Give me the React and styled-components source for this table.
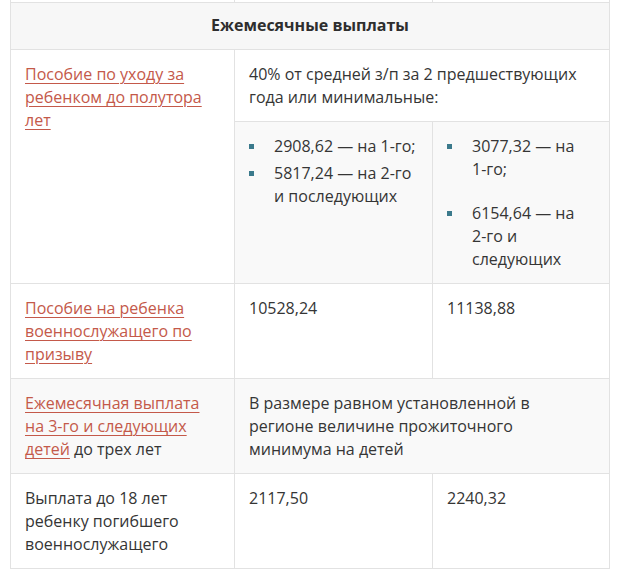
import React from 'react'
import styled, { createGlobalStyle, css } from 'styled-components'

const GlobalStyle = createGlobalStyle`
    html, body {
        margin: 0;
        padding: 0;
        background: #ffffff;
    }
    body {
        font-family: "Open Sans", "Noto Sans", "Liberation Sans", sans-serif;
        font-size: 16px;
        line-height: 23px;
        color: #353535;
    }
`
const Table = styled.div`
    width: 600px;
    margin-left: 10px;
    display: grid;
    grid-template-columns: 224px 198px 177px;
    border-left: 1px solid #e2e2e2;
    box-sizing: border-box;
`
const Cell = styled.div`
    box-sizing: border-box;
    padding: 13px 14px 12px 14px;
    border-right: 1px solid #e2e2e2;
    border-bottom: 1px solid #e2e2e2;
    background: ${({ $shade }) => $shade ? '#f9f9f9' : '#ffffff'};
    ${({ $wide }) => $wide && css`grid-column: 2 / 4;`}
    ${({ $tall }) => $tall && css`grid-row: span 2;`}
`
const CutCell = styled.div`
    height: 3px;
    box-sizing: border-box;
    border-right: 1px solid #e2e2e2;
    border-bottom: 1px solid #e2e2e2;
`
const HeadCell = styled.div`
    grid-column: 1 / 4;
    box-sizing: border-box;
    padding: 11px 14px 12px;
    background: #f7f7f7;
    border-right: 1px solid #e2e2e2;
    border-bottom: 1px solid #e2e2e2;
    text-align: center;
    font-weight: 700;
    color: #2e2e2e;
`
const DocLink = styled.a`
    color: #c4594a;
    text-decoration: underline;
    text-underline-offset: 3px;
    text-decoration-thickness: 1px;
`
const List = styled.ul`
    list-style: none;
    margin: 0;
    padding: 0;
`
const Item = styled.li`
    position: relative;
    padding-left: 25px;
    margin-bottom: ${({ $after }) => $after}px;
    &:last-child { margin-bottom: 0; }
    &::before {
        content: '';
        position: absolute;
        left: 0;
        top: 9px;
        width: 5px;
        height: 5px;
        background: #3b7a8c;
    }
`
const NoBreak = styled.span`
    white-space: nowrap;
`

export default function App() {
    return (
        <>
            <GlobalStyle />
            <Table>
                <CutCell /><CutCell /><CutCell />
                <HeadCell>Ежемесячные выплаты</HeadCell>

                <Cell $tall>
                    <DocLink href="#">Пособие по уходу за ребенком до полутора лет</DocLink>
                </Cell>
                <Cell $wide>40% от средней з/п за 2 предшествующих года или минимальные:</Cell>
                <Cell $shade>
                    <List>
                        <Item $after={4}>2908,62 — на <NoBreak>1-го;</NoBreak></Item>
                        <Item $after={4}>5817,24 — на <NoBreak>2-го</NoBreak> и последующих</Item>
                    </List>
                </Cell>
                <Cell $shade>
                    <List>
                        <Item $after={21}>3077,32 — на <NoBreak>1-го;</NoBreak></Item>
                        <Item $after={4}>6154,64 — на <NoBreak>2-го</NoBreak> и следующих</Item>
                    </List>
                </Cell>

                <Cell>
                    <DocLink href="#">Пособие на ребенка военнослужащего по призыву</DocLink>
                </Cell>
                <Cell>10528,24</Cell>
                <Cell>11138,88</Cell>

                <Cell $shade>
                    <DocLink href="#">Ежемесячная выплата на 3-го и следующих детей</DocLink> до трех лет
                </Cell>
                <Cell $shade $wide>В размере равном установленной в регионе величине прожиточного минимума на детей</Cell>

                <Cell>Выплата до 18 лет ребенку погибшего военнослужащего</Cell>
                <Cell>2117,50</Cell>
                <Cell>2240,32</Cell>
            </Table>
        </>
    )
}
